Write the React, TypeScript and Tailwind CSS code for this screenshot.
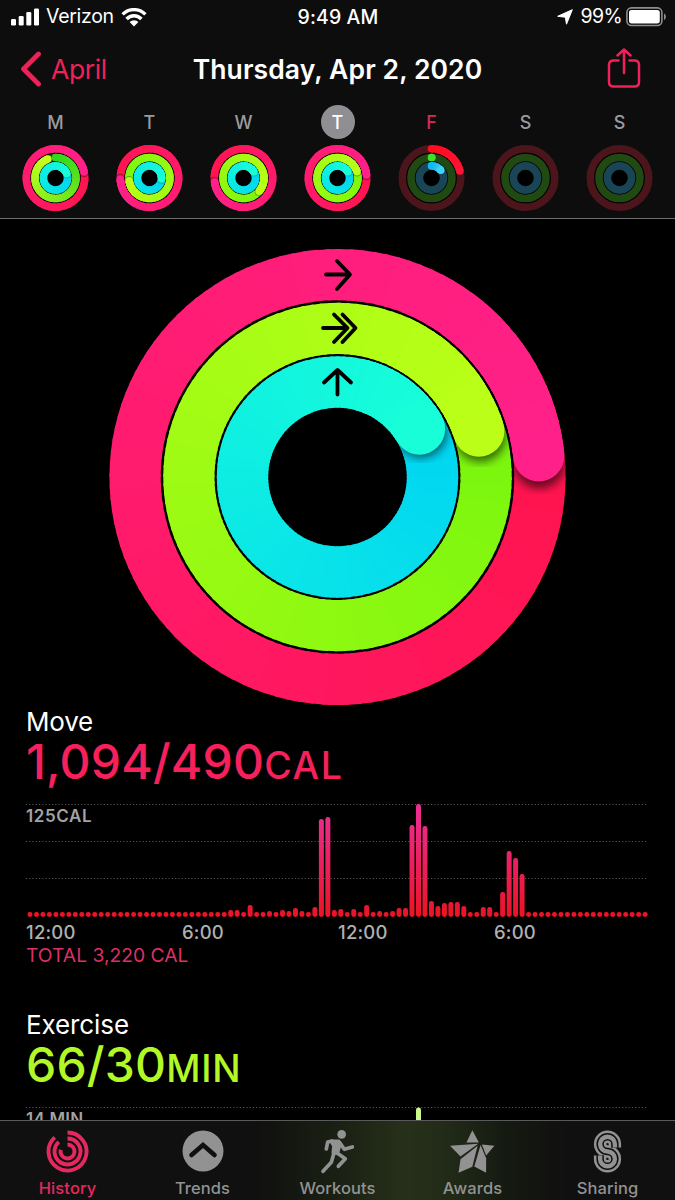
import { ReactNode } from 'react'

interface RingData {
  angle: number
  from: number[]
  to: number[]
  track: string
}

interface DayData {
  label: string
  state?: string
  rings: RingData[]
}

const RED = [255, 20, 78]
const PINK = [255, 33, 138]
const GREEN = [122, 246, 14]
const LIME = [188, 255, 24]
const BLUE = [0, 212, 242]
const AQUA = [24, 255, 216]

const move = (angle: number): RingData => ({ angle, from: RED, to: PINK, track: '#4c141b' })
const exercise = (angle: number): RingData => ({ angle, from: GREEN, to: LIME, track: '#214a12' })
const stand = (angle: number): RingData => ({ angle, from: BLUE, to: AQUA, track: '#1a4557' })

const days: DayData[] = [
  { label: 'M', rings: [move(438), { angle: 338, from: [50, 215, 30], to: [205, 255, 30], track: '#214a12' }, stand(430)] },
  { label: 'T', rings: [move(628), exercise(622), stand(455)] },
  { label: 'W', rings: [move(622), exercise(490), stand(420)] },
  { label: 'T', state: 'selected', rings: [move(444), exercise(432), stand(420)] },
  {
    label: 'F',
    state: 'today',
    rings: [
      { angle: 76, from: [255, 12, 30], to: [255, 20, 55], track: '#4c141b' },
      { angle: 1, from: [60, 225, 40], to: [60, 225, 40], track: '#214a12' },
      { angle: 50, from: [20, 185, 240], to: [60, 215, 245], track: '#1a4557' },
    ],
  },
  { label: 'S', rings: [move(0), exercise(0), stand(0)] },
  { label: 'S', rings: [move(0), exercise(0), stand(0)] },
]

const dayRadius = [29.2, 20.5, 12.1]

const point = (c: number, r: number, deg: number) => {
  const a = ((deg - 90) * Math.PI) / 180
  return [c + r * Math.cos(a), c + r * Math.sin(a)]
}

const arc = (c: number, r: number, start: number, end: number) => {
  const [x1, y1] = point(c, r, start)
  const [x2, y2] = point(c, r, end)
  return `M${x1.toFixed(2)} ${y1.toFixed(2)}A${r} ${r} 0 ${end - start > 180 ? 1 : 0} 1 ${x2.toFixed(2)} ${y2.toFixed(2)}`
}

const mix = (a: number[], b: number[], t: number) =>
  `rgb(${a.map((v, i) => Math.round(v + (b[i] - v) * t)).join(',')})`

function Ring({ id, c, r, width, data }: { id: string, c: number, r: number, width: number, data: RingData }) {
  const { angle, from, to, track } = data
  const large = width > 20
  const start = Math.max(0, angle - 360)
  const step = large ? 3 : 10
  const overlap = large ? 1 : 8
  const segments = []
  for (let a = start; a < angle; a += step) {
    const end = Math.min(a + step + overlap, angle)
    segments.push({ d: arc(c, r, a, end), color: mix(from, to, (a - start) / (angle - start)) })
  }
  const [tipX, tipY] = point(c, r, angle)
  const [shadowX, shadowY] = point(c, r, angle + (large ? 2 : 3))

  return (
    <g fill="none" strokeWidth={width}>
      {angle < 360 && <circle cx={c} cy={c} r={r} stroke={track} />}
      {angle > 0 && angle < 360 && <circle cx={c} cy={c - r} r={width / 2} fill={mix(from, to, 0)} stroke="none" />}
      {segments.map((s, i) => <path key={i} d={s.d} stroke={s.color} />)}
      {angle > 360 && (
        <>
          <mask id={`${id}-mask`}>
            <circle cx={c} cy={c} r={r} stroke="#fff" />
          </mask>
          <filter id={`${id}-blur`} x="-50%" y="-50%" width="200%" height="200%">
            <feGaussianBlur stdDeviation={width / 11} />
          </filter>
          <g mask={`url(#${id}-mask)`}>
            <circle cx={shadowX} cy={shadowY} r={width / 2} fill="#000" fillOpacity={large ? 0.6 : 0.3} stroke="none" filter={`url(#${id}-blur)`} />
          </g>
          {segments.slice(large ? -16 : -6).map((s, i) => <path key={i} d={s.d} stroke={s.color} />)}
        </>
      )}
      {angle > 0 && <circle cx={tipX} cy={tipY} r={width / 2} fill={mix(from, to, 0.98)} stroke="none" />}
    </g>
  )
}

function DayRings({ id, rings }: { id: string, rings: RingData[] }) {
  return (
    <svg width="67" height="68" viewBox="0.5 0 67 68">
      <circle cx="34" cy="34" r="32" fill="#000" />
      {rings.map((ring, i) => (
        <Ring key={i} id={`${id}-${i}`} c={34} r={dayRadius[i]} width={7.6} data={ring} />
      ))}
    </svg>
  )
}

function ActivityRings() {
  return (
    <svg width="457" height="458" viewBox="0.5 0 457 458">
      <Ring id="move" c={229} r={202.4} width={51.2} data={move(444)} />
      <Ring id="exercise" c={229} r={148.6} width={51.2} data={exercise(432)} />
      <Ring id="stand" c={229} r={95} width={51.4} data={stand(419.6)} />
      <g fill="none" stroke="#000" strokeWidth="3.8" strokeLinecap="round" strokeLinejoin="round">
        <path d="M217.500 26.500H241M228.500 13L241.500 26.500L228.500 41" />
        <path d="M214.500 80H238M225.500 66.500L239 80L225.500 94M234 66.500L247 80L234 94" />
        <path d="M229 146.500V122.500M215.500 134.500L229 122L242.500 134.500" />
      </g>
    </svg>
  )
}

// calories burned per 15 minutes, in chart pixels
const bars: number[] = Array(96).fill(5)
const active: [number, number[]][] = [
  [31, [7, 7, 5, 12, 5, 5, 6, 5, 7, 6, 9, 6, 5, 10, 98, 100, 7, 8, 5, 8, 5, 12, 5, 6, 5, 6, 9, 9]],
  [59, [92, 113, 91, 16, 11, 14, 15, 15, 11, 5, 5, 10, 10, 5, 25, 66, 59, 43]],
]
active.forEach(([offset, values]) => values.forEach((v, i) => { bars[offset + i] = v }))

function MoveChart() {
  return (
    <svg width="675" height="118" viewBox="0 801 675 118">
      <defs>
        <linearGradient id="bar" gradientUnits="userSpaceOnUse" x1="0" y1="804" x2="0" y2="917">
          <stop offset="0" stopColor="#ec2f97" />
          <stop offset="0.5" stopColor="#ea2160" />
          <stop offset="1" stopColor="#ea1424" />
        </linearGradient>
      </defs>
      {[804.5, 841.5, 878.5].map((y) => (
        <path key={y} d={`M26 ${y}H648`} stroke="#555" strokeWidth="1" strokeDasharray="1.200 2.040" />
      ))}
      {bars.map((h, i) => (
        <rect key={i} x={27.5 + i * 6.475} y={917 - h} width="5" height={h} rx="2.400" fill="url(#bar)" />
      ))}
    </svg>
  )
}

function StatusBar() {
  return (
    <div className="grid h-[34px] grid-cols-3 items-center pl-[11px] pr-[8px]">
      <div className="flex items-center">
        <svg width="28" height="18" viewBox="0 0 28 18" fill="#fff">
          <rect x="0" y="11" width="5" height="6.500" rx="1.300" />
          <rect x="7.700" y="8" width="5" height="9.500" rx="1.300" />
          <rect x="15.300" y="4" width="5" height="13.500" rx="1.300" />
          <rect x="23" y="0.500" width="5" height="17" rx="1.300" />
        </svg>
        <span className="ml-[7px] text-[19.5px] tracking-[-0.3px]">Verizon</span>
        <svg className="ml-[7px]" width="26" height="19" viewBox="0 0 26 19" fill="none" stroke="#fff" strokeWidth="3.400">
          <path d="M1.600 6.400A16 16 0 0 1 24.400 6.400" />
          <path d="M5.600 11A10 10 0 0 1 20.400 11" />
          <path d="M13 18.500L8.600 14A6.300 6.300 0 0 1 17.400 14Z" fill="#fff" stroke="none" />
        </svg>
      </div>
      <span className="pt-[1px] pr-[2px] text-center text-[19.5px] font-medium tracking-[0.1px]">9:49 AM</span>
      <div className="flex items-center justify-end">
        <svg width="16" height="16" viewBox="0 0 16 16" fill="#fff" stroke="#fff" strokeLinejoin="round">
          <path d="M15.300 0.700L9.500 15.200L8.300 8.200L0.700 7.300Z" />
        </svg>
        <span className="ml-[7px] text-[19.5px] tracking-[-0.6px]">99%</span>
        <svg className="ml-[4px]" width="41" height="20" viewBox="0 0 41 20">
          <rect x="0.900" y="0.900" width="35" height="17.600" rx="4.500" fill="none" stroke="#8d8d8d" strokeWidth="1.600" />
          <rect x="3" y="3" width="30.800" height="13.400" rx="2.600" fill="#fff" />
          <path d="M38 6.500C40.500 7.500 40.500 12 38 13Z" fill="#8d8d8d" />
        </svg>
      </div>
    </div>
  )
}

function Header() {
  return (
    <header className="h-[219px] shrink-0 border-b border-[#6c6c6c] bg-[#0d0d0d]">
      <StatusBar />
      <div className="grid h-[69px] grid-cols-[150px_1fr_150px] items-center">
        <div className="flex items-center pl-[20px] text-[#ee2259]">
          <svg width="22" height="36" viewBox="0 0 22 36" fill="none" stroke="currentColor" strokeWidth="4.800" strokeLinecap="round" strokeLinejoin="round">
            <path d="M18.500 3L3.500 18L18.500 33" />
          </svg>
          <span className="ml-[9px] pt-[1px] text-[26.5px] leading-none tracking-[-0.4px]">April</span>
        </div>
        <h1 className="pt-[2px] text-center text-[26.5px] font-semibold leading-none tracking-[0.1px] whitespace-nowrap">Thursday, Apr 2, 2020</h1>
        <svg className="ml-auto mr-[34px]" width="34" height="42" viewBox="0 0 34 42" fill="none" stroke="#ee2259" strokeWidth="2.500" strokeLinecap="round" strokeLinejoin="round">
          <path d="M11.500 12.500H6.500Q2 12.500 2 17V34Q2 38.500 6.500 38.500H27.500Q32 38.500 32 34V17Q32 12.500 27.500 12.500H22.500" />
          <path d="M17 25V2M10.500 7.500L17 1.500L23.500 7.500" />
        </svg>
      </div>
      <div className="grid grid-cols-7 px-[8.5px]">
        {days.map((day, i) => (
          <div key={i} className="flex flex-col items-center">
            <span className={
              'mt-[2px] flex h-[34px] w-[34px] items-center justify-center rounded-full pt-[1px] text-[18px] font-medium ' +
              (day.state === 'selected' ? 'bg-[#8e8e93] text-white' : day.state === 'today' ? 'text-[#d92b55]' : 'text-[#9b9b9f]')
            }>
              {day.label}
            </span>
            <div className="mt-[5px]">
              <DayRings id={`day${i}`} rings={day.rings} />
            </div>
          </div>
        ))}
      </div>
    </header>
  )
}

function Tab({ label, active, children }: { label: string, active?: boolean, children: ReactNode }) {
  return (
    <div className={'flex flex-col items-center pt-[7px] ' + (active ? 'text-[#e52860]' : 'text-[#929292]')}>
      <div className="flex h-[46px] items-center justify-center">{children}</div>
      <span className="mt-[4px] text-[16.5px] font-medium leading-[20px] tracking-[0.1px]">{label}</span>
    </div>
  )
}

function TabBar() {
  const sharing = 'V64A22 22 0 1 0 889 86A22 22 0 1 1 867 108'
  return (
    <nav className="grid h-[80px] shrink-0 grid-cols-5 border-t border-[#5a5a5a] bg-[#101010] bg-[linear-gradient(90deg,transparent_38%,#1a2013_50%,#27301a_60%,#222b18_66%,#151a11_75%,transparent_84%)]">
      <Tab label="History" active>
        <svg width="43" height="43" viewBox="0 0 43 43" fill="none" stroke="currentColor" strokeWidth="3.900">
          <path d={arc(21.5, 19, 0, 318)} />
          <path d={arc(21.5, 13, 0, 318)} />
          <path d={arc(21.5, 7, 0, 285)} />
        </svg>
      </Tab>
      <Tab label="Trends">
        <svg width="42" height="42" viewBox="0 0 42 42">
          <circle cx="21" cy="21" r="20.500" fill="currentColor" />
          <path d="M9.500 25L21 15L32.500 25" fill="none" stroke="#101010" strokeWidth="4.600" strokeLinecap="round" />
        </svg>
      </Tab>
      <Tab label="Workouts">
        <svg width="36" height="45" viewBox="28 18 108 135" fill="none" stroke="currentColor" strokeWidth="11" strokeLinecap="round" strokeLinejoin="round">
          <circle cx="93" cy="34" r="13" fill="currentColor" stroke="none" />
          <path d="M62 55L84 55L88 62L80 90L68 90L70 68Z" fill="currentColor" />
          <path d="M64 54L51 57L47 78" />
          <path d="M88 60L101 79L125 72" />
          <path d="M70 90L62 118L37 145" />
          <path d="M76 88L104 107L83 130" />
        </svg>
      </Tab>
      <Tab label="Awards">
        <svg width="46" height="45" viewBox="417 22 140 135" fill="currentColor">
          <path d="M485 25L505 62L467 62Z" />
          <path d="M417 72L503 66L449 105Z" />
          <path d="M449 113L501 72L485 136L443 154Z" />
          <path d="M510 70L527 110L527 154L491 135Z" />
          <path d="M514 68L552 72L527 102Z" />
        </svg>
      </Tab>
      <Tab label="Sharing">
        <svg width="29" height="45" viewBox="846 19 86 134" fill="none">
          <path d={`M911 74${sharing}V98`} stroke="currentColor" strokeWidth="37" />
          <path d={`M911 75${sharing}V97`} stroke="#101010" strokeWidth="22" />
          <path d={`M911 74${sharing}V98`} stroke="currentColor" strokeWidth="13" />
        </svg>
      </Tab>
    </nav>
  )
}

export default function App() {
  return (
    <div className="flex h-[1200px] w-[675px] flex-col overflow-hidden bg-black font-['Inter',sans-serif] text-white">
      <Header />
      <main className="min-h-0 flex-1 overflow-hidden">
        <div className="flex h-[486px] justify-center pt-[29px]">
          <ActivityRings />
        </div>
        <section className="h-[303px]">
          <h2 className="pl-[26px] pt-[3px] text-[26px] leading-[28px] tracking-[-0.2px]">Move</h2>
          <p className="flex items-baseline pl-[26px] text-[48px] leading-[52px] tracking-[0.2px] text-[#f5205c] font-medium">
            1,094/490<span className="text-[37.5px] tracking-[1.6px]">CAL</span>
          </p>
          <div className="mt-[9px] grid">
            <div className="col-start-1 row-start-1">
              <MoveChart />
            </div>
            <span className="col-start-1 row-start-1 pl-[26px] pt-[5px] text-[17px] font-semibold leading-[20px] tracking-[0.6px] text-[#a3a3a3]">125CAL</span>
          </div>
          <div className="grid h-[24px] grid-cols-[156px_156px_156px_1fr] items-center pl-[26px] text-[18.5px] font-medium tracking-[0.2px] text-[#b0b0b0]">
            <span>12:00</span>
            <span>6:00</span>
            <span>12:00</span>
            <span>6:00</span>
          </div>
          <p className="pl-[26px] text-[19.3px] leading-[24px] text-[#dc2f66]">TOTAL 3,220 CAL</p>
        </section>
        <section>
          <h2 className="pl-[26px] pt-[3px] text-[26px] leading-[28px] tracking-[-0.1px]">Exercise</h2>
          <p className="flex items-baseline pl-[26px] text-[48px] leading-[52px] tracking-[0.2px] text-[#b2f827] font-medium">
            66/30<span className="text-[37.5px] tracking-[0.8px]">MIN</span>
          </p>
          <div className="mt-[9px] grid">
            <svg className="col-start-1 row-start-1" width="675" height="40" viewBox="0 0 675 40">
              <path d="M26 3.500H648" stroke="#555" strokeWidth="1" strokeDasharray="1.200 2.040" />
              <rect x="416" y="3.500" width="5" height="36" rx="2.400" fill="#cdf98c" />
            </svg>
            <span className="col-start-1 row-start-1 pl-[26px] pt-[5px] text-[17px] font-semibold leading-[20px] tracking-[0.2px] text-[#a3a3a3]">14 MIN</span>
          </div>
        </section>
      </main>
      <TabBar />
    </div>
  )
}
